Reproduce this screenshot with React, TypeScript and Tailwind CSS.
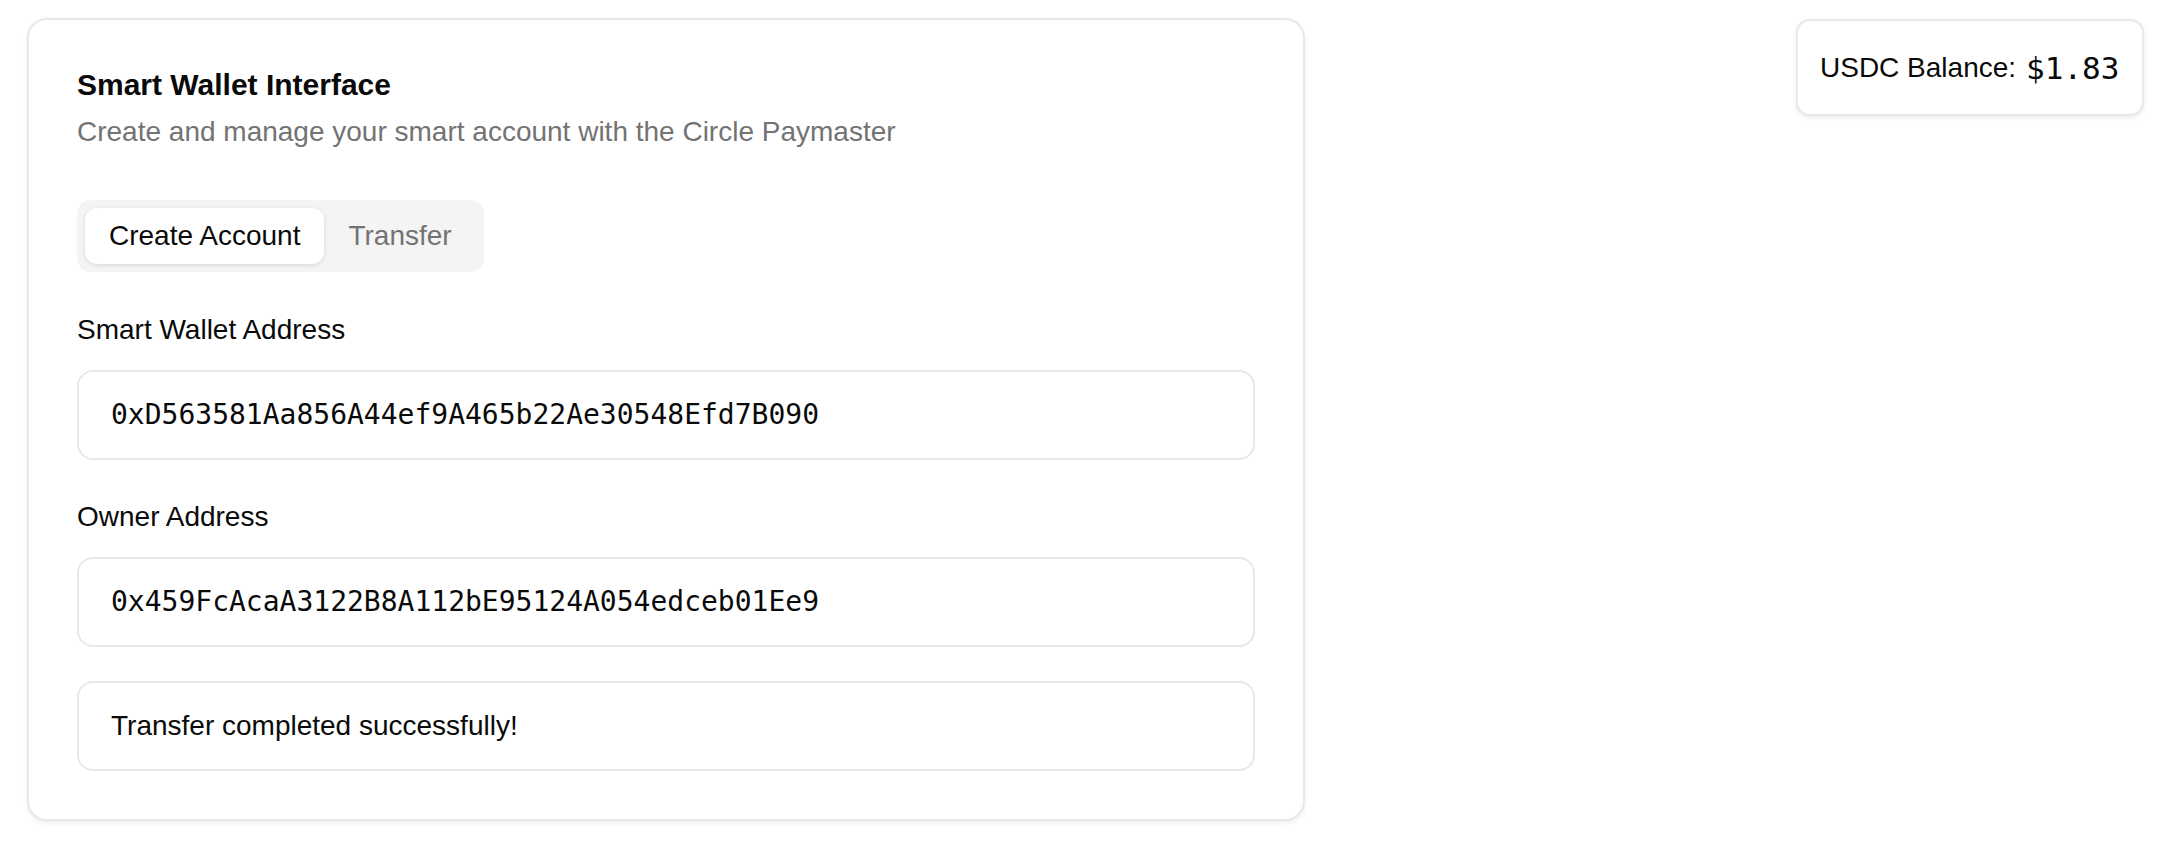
import React from "react";

export default function App() {
  return (
    <div className="min-h-[846px] w-full bg-white font-['Liberation_Sans',Arial,sans-serif] text-[#0a0a0a]">
      <div className="flex items-start justify-between pt-[18px] pl-[27px] pr-[18px]">
        {/* Main card */}
        <div className="w-[1278px] rounded-[20px] border-2 border-[#e8e8e8] bg-white px-[48px] pt-[47px] pb-[48px] shadow-[0_2px_5px_rgba(0,0,0,0.07)]">
          <h1 className="text-[30px] font-bold leading-[36px]">Smart Wallet Interface</h1>
          <p className="mt-[8px] text-[28px] leading-[42px] text-[#737373]">
            Create and manage your smart account with the Circle Paymaster
          </p>

          <div className="mt-[47px] inline-flex h-[72px] items-center rounded-[14px] bg-[#f4f4f4] p-[8px]">
            <button className="h-[56px] rounded-[12px] bg-white px-[24px] text-[28px] leading-[42px] text-[#0a0a0a] shadow-[0_1px_4px_rgba(0,0,0,0.12)]">
              Create Account
            </button>
            <button className="h-[56px] rounded-[12px] px-[24px] text-[28px] leading-[42px] text-[#737373]">
              Transfer
            </button>
          </div>

          <div className="mt-[37px]">
            <div className="text-[28px] leading-[42px]">Smart Wallet Address</div>
            <div className="mt-[19px] flex h-[90px] items-center rounded-[16px] border-2 border-[#e8e8e8] px-[32px] font-['DejaVu_Sans_Mono',monospace] text-[28px] leading-[42px]">
              0xD563581Aa856A44ef9A465b22Ae30548Efd7B090
            </div>
          </div>

          <div className="mt-[36px]">
            <div className="text-[28px] leading-[42px]">Owner Address</div>
            <div className="mt-[19px] flex h-[90px] items-center rounded-[16px] border-2 border-[#e8e8e8] px-[32px] font-['DejaVu_Sans_Mono',monospace] text-[28px] leading-[42px]">
              0x459FcAcaA3122B8A112bE95124A054edceb01Ee9
            </div>
          </div>

          <div className="mt-[34px] flex h-[90px] items-center rounded-[16px] border-2 border-[#e8e8e8] px-[32px] text-[28px] leading-[42px]">
            Transfer completed successfully!
          </div>
        </div>

        {/* Balance badge */}
        <div className="mt-[1px] flex h-[97px] w-[348px] items-center rounded-[14px] border-2 border-[#e8e8e8] bg-white pl-[22px] shadow-[0_2px_5px_rgba(0,0,0,0.08)]">
          <span className="text-[28px] leading-[42px]">USDC Balance:</span>
          <span className="ml-[10px] font-['DejaVu_Sans_Mono',monospace] text-[31px] leading-[42px]">$1.83</span>
        </div>
      </div>
    </div>
  );
}
